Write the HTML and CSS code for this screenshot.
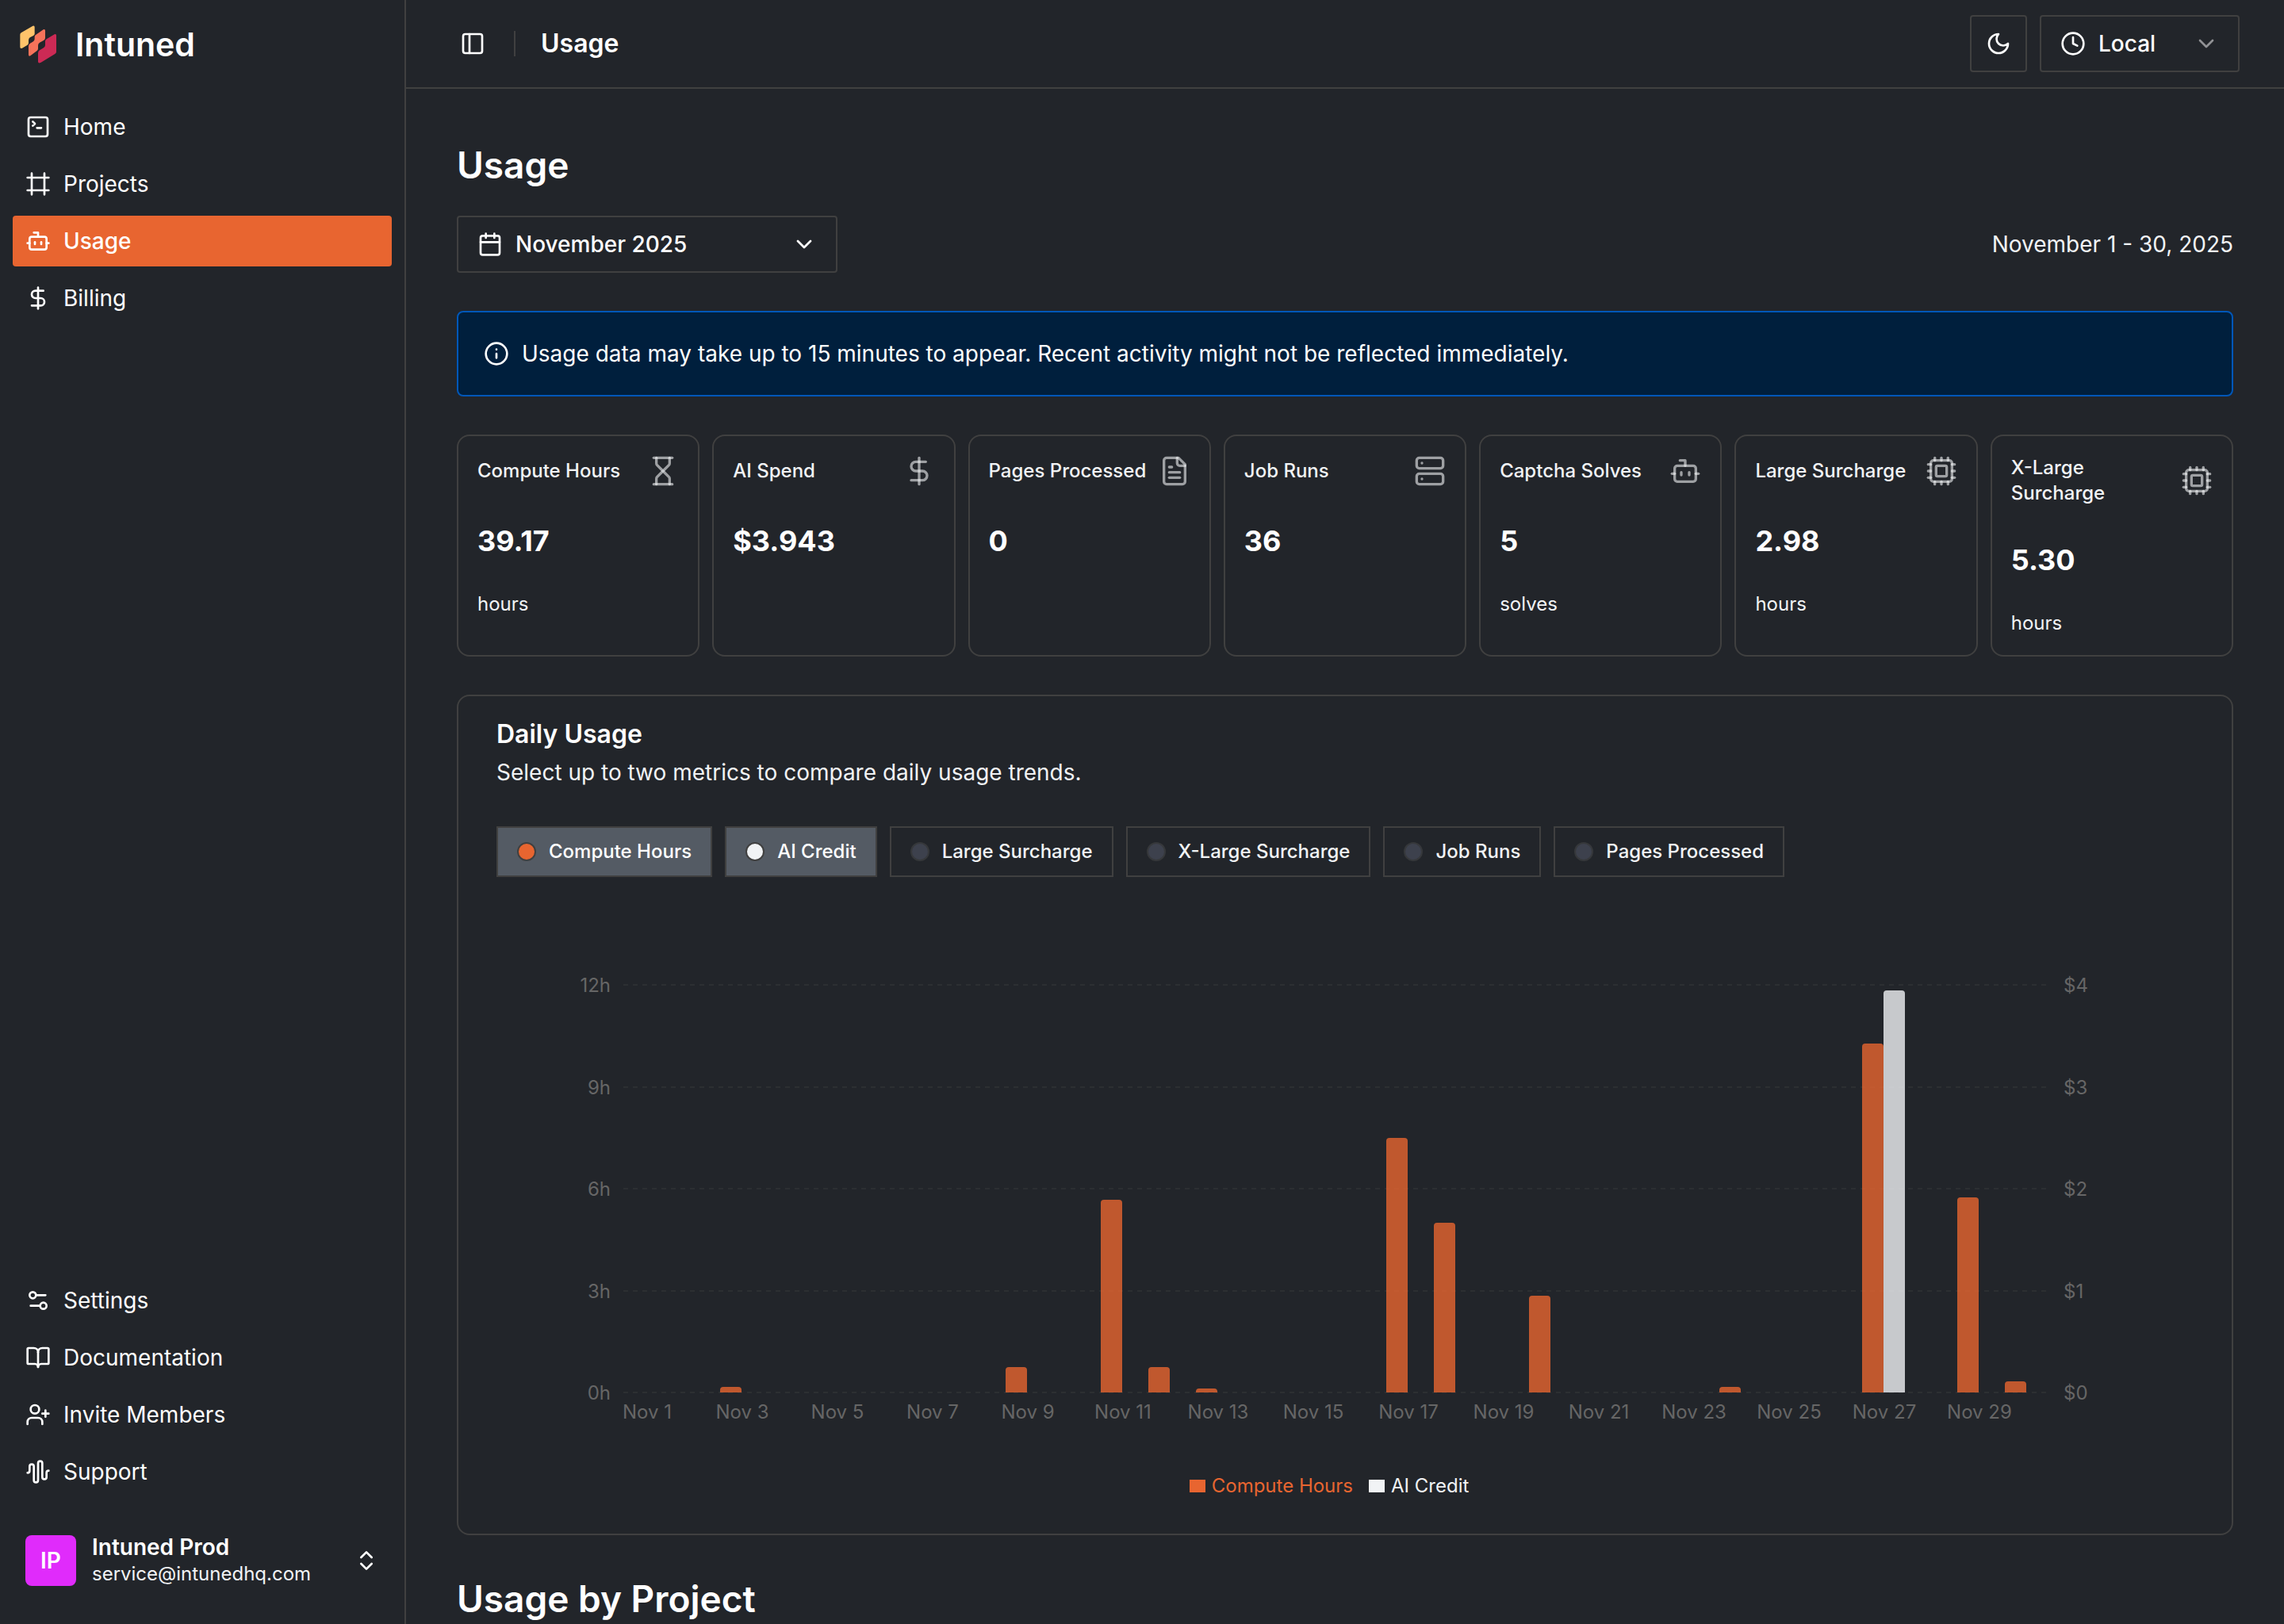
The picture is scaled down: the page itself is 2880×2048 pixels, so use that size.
FILE: index.html
```html
<!DOCTYPE html>
<html lang="en">

<head>
    <meta charset="utf-8">
    <title>Usage - Intuned</title>
    <meta name="viewport" content="width=device-width, initial-scale=1">
    <link rel="stylesheet" href="styles.css">
</head>

<body>

    <!-- shared icons -->
    <svg class="sprite" aria-hidden="true">
        <symbol id="i-terminal" viewBox="0 0 24 24"><path d="m7 11 2-2-2-2M11 13h4"/><rect x="3" y="3" width="18" height="18" rx="2"/></symbol>
        <symbol id="i-frame" viewBox="0 0 24 24"><path d="M22 6H2M22 18H2M6 2v20M18 2v20"/></symbol>
        <symbol id="i-bot" viewBox="0 0 24 24"><path d="M12 8V4H8"/><rect x="4" y="8" width="16" height="12" rx="2"/><path d="M2 14h2"/><path d="M20 14h2"/><path d="M15 13v2"/><path d="M9 13v2"/></symbol>
        <symbol id="i-dollar" viewBox="0 0 24 24"><path d="M12 2v20"/><path d="M17 5H9.5a3.5 3.5 0 0 0 0 7h5a3.5 3.5 0 0 1 0 7H6"/></symbol>
        <symbol id="i-settings" viewBox="0 0 24 24"><path d="M14 17H5M19 7h-9"/><circle cx="17" cy="17" r="3"/><circle cx="7" cy="7" r="3"/></symbol>
        <symbol id="i-book" viewBox="0 0 24 24"><path d="M12 7v14"/><path d="M3 18a1 1 0 0 1-1-1V4a1 1 0 0 1 1-1h5a4 4 0 0 1 4 4 4 4 0 0 1 4-4h5a1 1 0 0 1 1 1v13a1 1 0 0 1-1 1h-6a3 3 0 0 0-3 3 3 3 0 0 0-3-3z"/></symbol>
        <symbol id="i-user-plus" viewBox="0 0 24 24"><path d="M16 21v-2a4 4 0 0 0-4-4H6a4 4 0 0 0-4 4v2"/><circle cx="9" cy="7" r="4"/><path d="M19 8v6M22 11h-6"/></symbol>
        <symbol id="i-wave" viewBox="0 0 24 24"><path d="M2 13a2 2 0 0 0 2-2V7a2 2 0 0 1 4 0v13a2 2 0 0 0 4 0V4a2 2 0 0 1 4 0v13a2 2 0 0 0 4 0v-4a2 2 0 0 1 2-2"/></symbol>
        <symbol id="i-updown" viewBox="0 0 24 24"><path d="m7 15 5 5 5-5M7 9l5-5 5 5"/></symbol>
        <symbol id="i-panel" viewBox="0 0 24 24"><rect x="3" y="3" width="18" height="18" rx="2"/><path d="M9 3v18"/></symbol>
        <symbol id="i-moon" viewBox="0 0 24 24"><path d="M12 3a6 6 0 0 0 9 9 9 9 0 1 1-9-9Z"/></symbol>
        <symbol id="i-clock" viewBox="0 0 24 24"><circle cx="12" cy="12" r="10"/><path d="M12 6v6l4 2"/></symbol>
        <symbol id="i-chevron" viewBox="0 0 24 24"><path d="m6 9 6 6 6-6"/></symbol>
        <symbol id="i-calendar" viewBox="0 0 24 24"><path d="M8 2v4M16 2v4M3 10h18"/><rect x="3" y="4" width="18" height="18" rx="2"/></symbol>
        <symbol id="i-info" viewBox="0 0 24 24"><circle cx="12" cy="12" r="10"/><path d="M12 16v-4M12 8h.01"/></symbol>
        <symbol id="i-hourglass" viewBox="0 0 24 24"><path d="M5 22h14"/><path d="M5 2h14"/><path d="M17 22v-4.172a2 2 0 0 0-.586-1.414L12 12l-4.414 4.414A2 2 0 0 0 7 17.828V22"/><path d="M7 2v4.172a2 2 0 0 0 .586 1.414L12 12l4.414-4.414A2 2 0 0 0 17 6.172V2"/></symbol>
        <symbol id="i-file" viewBox="0 0 24 24"><path d="M15 2H6a2 2 0 0 0-2 2v16a2 2 0 0 0 2 2h12a2 2 0 0 0 2-2V7Z"/><path d="M14 2v4a2 2 0 0 0 2 2h4"/><path d="M10 9H8"/><path d="M16 13H8"/><path d="M16 17H8"/></symbol>
        <symbol id="i-server" viewBox="0 0 24 24"><rect x="2" y="2" width="20" height="8" rx="2"/><rect x="2" y="14" width="20" height="8" rx="2"/><path d="M6 6h.01M6 18h.01"/></symbol>
        <symbol id="i-cpu" viewBox="0 0 24 24"><rect x="4" y="4" width="16" height="16" rx="2"/><rect x="8" y="8" width="8" height="8" rx="1"/><path d="M12 20v2"/><path d="M12 2v2"/><path d="M17 20v2"/><path d="M17 2v2"/><path d="M2 12h2"/><path d="M2 17h2"/><path d="M2 7h2"/><path d="M20 12h2"/><path d="M20 17h2"/><path d="M20 7h2"/><path d="M7 20v2"/><path d="M7 2v2"/></symbol>
    </svg>

    <div class="app">
        <aside class="sidebar">
            <a class="brand" href="#">
                <svg class="brand-mark" viewBox="72 96 144 144" aria-hidden="true">
                    <path fill="#ffc46b" d="M80 124L124 98Q131 95 131 103V128Q131 132 126 135L113 142Q108 146 108 153V163Q108 167 104 170L84 182Q76 186 76 178V131Q76 127 80 124Z"/>
                    <path fill="#f5735a" d="M135 132L164 112Q171 109 171 116V143Q171 149 166 152L150 161Q144 165 144 172V184Q144 190 139 193L115 211Q108 214 108 207V175Q108 168 114 164L126 157Q131 153 131 147V139Q131 135 135 132Z"/>
                    <path fill="#cc2a55" d="M176 148L206 130Q213 127 213 134V196Q213 201 208 204L154 237Q144 241 144 233V201Q144 194 150 190L165 181Q171 177 171 171V156Q171 151 176 148Z"/>
                </svg>
                <span>Intuned</span>
            </a>
            <nav class="nav">
                <a class="nav-item" href="#"><svg class="icon"><use href="#i-terminal"/></svg>Home</a>
                <a class="nav-item" href="#"><svg class="icon"><use href="#i-frame"/></svg>Projects</a>
                <a class="nav-item active" href="#" aria-current="page"><svg class="icon"><use href="#i-bot"/></svg>Usage</a>
                <a class="nav-item" href="#"><svg class="icon"><use href="#i-dollar"/></svg>Billing</a>
            </nav>
            <nav class="nav nav-bottom">
                <a class="nav-item" href="#"><svg class="icon"><use href="#i-settings"/></svg>Settings</a>
                <a class="nav-item" href="#"><svg class="icon"><use href="#i-book"/></svg>Documentation</a>
                <a class="nav-item" href="#"><svg class="icon"><use href="#i-user-plus"/></svg>Invite Members</a>
                <a class="nav-item" href="#"><svg class="icon"><use href="#i-wave"/></svg>Support</a>
            </nav>
            <button class="account" type="button">
                <span class="avatar">IP</span>
                <span class="account-text">
                    <span class="account-name">Intuned Prod</span>
                    <span class="account-mail">service@intunedhq.com</span>
                </span>
                <svg class="icon"><use href="#i-updown"/></svg>
            </button>
        </aside>

        <div class="page">
            <header class="topbar">
                <button class="toggle" type="button" aria-label="Toggle sidebar"><svg class="icon"><use href="#i-panel"/></svg></button>
                <span class="divider"></span>
                <span class="topbar-title">Usage</span>
                <button class="theme" type="button" aria-label="Toggle theme"><svg class="icon"><use href="#i-moon"/></svg></button>
                <label class="select select-zone">
                    <svg class="icon"><use href="#i-clock"/></svg>
                    <select aria-label="Time zone">
                        <option>Local</option>
                        <option>UTC</option>
                    </select>
                    <svg class="icon dim"><use href="#i-chevron"/></svg>
                </label>
            </header>

            <main class="content">
                <h1 class="heading">Usage</h1>

                <div class="period">
                    <label class="select select-month">
                        <svg class="icon"><use href="#i-calendar"/></svg>
                        <select aria-label="Month">
                            <option>November 2025</option>
                            <option>October 2025</option>
                        </select>
                        <svg class="icon"><use href="#i-chevron"/></svg>
                    </label>
                    <span class="range">November 1 - 30, 2025</span>
                </div>

                <div class="notice" role="status">
                    <svg class="icon"><use href="#i-info"/></svg>
                    <span>Usage data may take up to 15 minutes to appear. Recent activity might not be reflected immediately.</span>
                </div>

                <section class="stats">
                    <div class="stat">
                        <div class="stat-head"><h2>Compute Hours</h2><svg class="icon icon-lg"><use href="#i-hourglass"/></svg></div>
                        <p class="stat-value">39.17</p>
                        <p class="stat-unit">hours</p>
                    </div>
                    <div class="stat">
                        <div class="stat-head"><h2>AI Spend</h2><svg class="icon icon-lg"><use href="#i-dollar"/></svg></div>
                        <p class="stat-value">$3.943</p>
                    </div>
                    <div class="stat">
                        <div class="stat-head"><h2>Pages Processed</h2><svg class="icon icon-lg"><use href="#i-file"/></svg></div>
                        <p class="stat-value">0</p>
                    </div>
                    <div class="stat">
                        <div class="stat-head"><h2>Job Runs</h2><svg class="icon icon-lg"><use href="#i-server"/></svg></div>
                        <p class="stat-value">36</p>
                    </div>
                    <div class="stat">
                        <div class="stat-head"><h2>Captcha Solves</h2><svg class="icon icon-lg"><use href="#i-bot"/></svg></div>
                        <p class="stat-value">5</p>
                        <p class="stat-unit">solves</p>
                    </div>
                    <div class="stat">
                        <div class="stat-head"><h2>Large Surcharge</h2><svg class="icon icon-lg"><use href="#i-cpu"/></svg></div>
                        <p class="stat-value">2.98</p>
                        <p class="stat-unit">hours</p>
                    </div>
                    <div class="stat">
                        <div class="stat-head"><h2>X-Large Surcharge</h2><svg class="icon icon-lg"><use href="#i-cpu"/></svg></div>
                        <p class="stat-value">5.30</p>
                        <p class="stat-unit">hours</p>
                    </div>
                </section>

                <section class="daily">
                    <h2 class="daily-title">Daily Usage</h2>
                    <p class="daily-sub">Select up to two metrics to compare daily usage trends.</p>

                    <div class="metrics">
                        <button class="metric on" type="button" aria-pressed="true"><i class="dot dot-hours"></i>Compute Hours</button>
                        <button class="metric on" type="button" aria-pressed="true"><i class="dot dot-credit"></i>AI Credit</button>
                        <button class="metric" type="button" aria-pressed="false"><i class="dot"></i>Large Surcharge</button>
                        <button class="metric" type="button" aria-pressed="false"><i class="dot"></i>X-Large Surcharge</button>
                        <button class="metric" type="button" aria-pressed="false"><i class="dot"></i>Job Runs</button>
                        <button class="metric" type="button" aria-pressed="false"><i class="dot"></i>Pages Processed</button>
                    </div>

                    <div class="chart">
                        <div class="axis axis-left"><span>12h</span><span>9h</span><span>6h</span><span>3h</span><span>0h</span></div>
                        <div class="plot">
                            <div class="lines"><i></i><i></i><i></i><i></i><i></i></div>
                            <!-- one column per day of the month -->
                            <div class="days">
                                <div class="day" style="grid-column: 3"><i class="bar" style="height: 1.4%"></i></div>
                                <div class="day" style="grid-column: 9"><i class="bar" style="height: 6.2%"></i></div>
                                <div class="day" style="grid-column: 11"><i class="bar" style="height: 47.2%"></i></div>
                                <div class="day" style="grid-column: 12"><i class="bar" style="height: 6.2%"></i></div>
                                <div class="day" style="grid-column: 13"><i class="bar" style="height: 0.9%"></i></div>
                                <div class="day" style="grid-column: 17"><i class="bar" style="height: 62.5%"></i></div>
                                <div class="day" style="grid-column: 18"><i class="bar" style="height: 41.6%"></i></div>
                                <div class="day" style="grid-column: 20"><i class="bar" style="height: 23.7%"></i></div>
                                <div class="day" style="grid-column: 24"><i class="bar" style="height: 1.4%"></i></div>
                                <div class="day" style="grid-column: 27"><i class="bar" style="height: 85.7%"></i><i class="bar bar-credit" style="height: 98.6%"></i></div>
                                <div class="day" style="grid-column: 29"><i class="bar" style="height: 47.8%"></i></div>
                                <div class="day" style="grid-column: 30"><i class="bar" style="height: 2.7%"></i></div>
                            </div>
                        </div>
                        <div class="axis axis-right"><span>$4</span><span>$3</span><span>$2</span><span>$1</span><span>$0</span></div>
                        <div class="dates">
                            <span>Nov 1</span><span>Nov 3</span><span>Nov 5</span><span>Nov 7</span><span>Nov 9</span>
                            <span>Nov 11</span><span>Nov 13</span><span>Nov 15</span><span>Nov 17</span><span>Nov 19</span>
                            <span>Nov 21</span><span>Nov 23</span><span>Nov 25</span><span>Nov 27</span><span>Nov 29</span>
                        </div>
                        <div class="legend">
                            <span class="legend-hours"><i></i>Compute Hours</span>
                            <span class="legend-credit"><i></i>AI Credit</span>
                        </div>
                    </div>
                </section>

                <h2 class="heading">Usage by Project</h2>
            </main>
        </div>
    </div>

</body>

</html>
```
FILE: styles.css
```css
* {
    box-sizing: border-box;
}

:root {
    --bg: #22252a;
    --line: #404040;
    --text: #ffffff;
    --soft: #f1f3f5;
    --axis: #666666;
    --orange: #e86530;
}

body {
    margin: 0;
    background: var(--bg);
    color: var(--text);
    font-family: Inter, "Liberation Sans", sans-serif;
    font-size: 28px;
    line-height: 40px;
}

h1,
h2,
p {
    margin: 0;
}

a {
    color: inherit;
    text-decoration: none;
}

button,
select {
    margin: 0;
    padding: 0;
    border: 0;
    background: none;
    color: inherit;
    font: inherit;
    cursor: pointer;
}

.sprite {
    display: none;
}

.icon {
    flex: none;
    width: 32px;
    height: 32px;
    fill: none;
    stroke: currentColor;
    stroke-width: 2;
    stroke-linecap: round;
    stroke-linejoin: round;
}

.icon-lg {
    width: 40px;
    height: 40px;
    color: rgba(241, 243, 245, 0.6);
}

.dim {
    opacity: 0.5;
}

.app {
    display: flex;
    height: 100vh;
}

/* sidebar */
.sidebar {
    display: flex;
    flex: none;
    flex-direction: column;
    width: 512px;
    border-right: 2px solid var(--line);
}

.brand {
    display: flex;
    align-items: center;
    gap: 23px;
    height: 112px;
    padding: 0 24px;
    font-size: 41px;
    font-weight: 600;
}

.brand-mark {
    width: 48px;
    height: 48px;
}

.nav {
    display: flex;
    flex-direction: column;
    gap: 8px;
    padding: 16px;
}

.nav-bottom {
    margin-top: auto;
}

.nav-item {
    display: flex;
    align-items: center;
    gap: 16px;
    height: 64px;
    padding: 0 16px;
    border-radius: 4px;
}

.nav-item.active {
    background: var(--orange);
    font-weight: 500;
}

.account {
    display: flex;
    align-items: center;
    gap: 20px;
    height: 96px;
    margin: 16px 16px 32px;
    padding: 0 16px;
    text-align: left;
}

.avatar {
    width: 64px;
    height: 64px;
    border-radius: 8px;
    background: #e02bfb;
    font-weight: 600;
    line-height: 64px;
    text-align: center;
}

.account-text {
    display: flex;
    flex: 1;
    flex-direction: column;
    gap: 2px;
    line-height: 32px;
}

.account-name {
    font-weight: 600;
}

.account-mail {
    color: var(--soft);
    font-size: 24px;
}

/* top bar */
.page {
    display: flex;
    flex: 1;
    flex-direction: column;
    min-width: 0;
}

.topbar {
    display: flex;
    flex: none;
    align-items: center;
    height: 112px;
    padding: 0 56px;
    border-bottom: 2px solid var(--line);
}

.toggle {
    display: flex;
    align-items: center;
    justify-content: center;
    width: 56px;
    height: 56px;
}

.divider {
    width: 2px;
    height: 32px;
    margin: 0 32px 0 24px;
    background: var(--line);
}

.topbar-title {
    font-size: 32px;
    font-weight: 600;
}

.theme {
    display: flex;
    align-items: center;
    justify-content: center;
    width: 72px;
    height: 72px;
    margin-left: auto;
    margin-right: 16px;
    border: 2px solid var(--line);
    border-radius: 4px;
}

.select {
    display: flex;
    align-items: center;
    gap: 16px;
    height: 72px;
    padding: 0 24px;
    border: 2px solid var(--line);
    border-radius: 4px;
    font-weight: 500;
}

.select select {
    flex: 1;
    min-width: 0;
    appearance: none;
}

.select option {
    background: var(--bg);
}

.select-zone {
    width: 252px;
}

.select-month {
    width: 480px;
}

/* content */
.content {
    display: flex;
    flex: 1;
    flex-direction: column;
    gap: 48px;
    min-height: 0;
    padding: 64px 64px 0;
    overflow: auto;
    scrollbar-width: none;
}

.heading {
    flex: none;
    font-size: 46px;
    font-weight: 600;
    line-height: 64px;
}

.period {
    display: flex;
    align-items: center;
    justify-content: space-between;
    margin-top: -16px;
}

.range {
    color: var(--soft);
}

.notice {
    display: flex;
    align-items: center;
    gap: 16px;
    padding: 32px;
    border: 2px solid #0057b8;
    border-radius: 8px;
    background: #001f3d;
}

.stats {
    display: grid;
    grid-template-columns: repeat(7, 1fr);
    gap: 16px;
}

.stat {
    padding: 24px;
    border: 2px solid var(--line);
    border-radius: 16px;
    color: var(--soft);
    font-size: 24px;
    line-height: 32px;
}

.stat-head {
    display: flex;
    align-items: center;
    justify-content: space-between;
}

.stat-head h2 {
    font-size: 24px;
    font-weight: 500;
}

.stat-value {
    margin: 48px 0 44px;
    color: var(--text);
    font-size: 36px;
    font-weight: 700;
    line-height: 40px;
}

/* daily chart */
.daily {
    padding: 28px 48px 44px;
    border: 2px solid var(--line);
    border-radius: 16px;
}

.daily-title {
    margin-bottom: 8px;
    font-size: 32px;
    font-weight: 600;
}

.daily-sub {
    color: var(--soft);
}

.metrics {
    display: flex;
    flex-wrap: wrap;
    gap: 16px;
    margin-top: 48px;
}

.metric {
    display: flex;
    align-items: center;
    gap: 16px;
    height: 64px;
    padding: 0 24px;
    border: 2px solid var(--line);
    color: var(--soft);
    font-size: 24px;
    font-weight: 500;
}

.metric.on {
    background: #545b64;
    color: var(--text);
}

.dot {
    width: 24px;
    height: 24px;
    border: 2px solid #36383b;
    border-radius: 50%;
    background: #3d414d;
}

.metric.on .dot {
    border-color: var(--line);
}

.metric .dot-hours {
    background: var(--orange);
}

.metric .dot-credit {
    background: var(--soft);
}

.chart {
    display: grid;
    grid-template-columns: 160px 1fr 180px;
    margin-top: 136px;
    color: var(--axis);
    font-size: 24px;
    line-height: 32px;
}

.axis {
    display: flex;
    flex-direction: column;
    justify-content: space-between;
    margin: -15px 0 -17px;
    padding: 0 16px;
}

.axis-left {
    text-align: right;
}

.plot {
    position: relative;
    height: 514px;
}

.lines {
    position: absolute;
    inset: -1px 0;
    display: flex;
    flex-direction: column;
    justify-content: space-between;
}

.lines i {
    height: 2px;
    background: repeating-linear-gradient(to right, #2c2f32 0 6px, transparent 6px 12px);
}

.days {
    position: relative;
    display: grid;
    grid-template-columns: repeat(30, 1fr);
    height: 100%;
}

.day {
    display: flex;
    grid-row: 1;
    align-items: flex-end;
    height: 514px;
    padding-left: 2px;
}

.bar {
    width: 27px;
    border-radius: 4px 4px 0 0;
    background: var(--orange);
    opacity: 0.8;
}

.bar-credit {
    background: var(--soft);
}

/* labels are centred on every second day */
.dates {
    display: grid;
    grid-column: 2;
    grid-template-columns: repeat(15, 1fr);
    margin: 9px calc(100% / 60) 0 calc(-100% / 60);
    text-align: center;
}

.legend {
    display: flex;
    grid-column: 2;
    justify-content: center;
    margin-top: 61px;
}

.legend span {
    display: flex;
    align-items: center;
    gap: 8px;
    margin-right: 20px;
}

.legend i {
    width: 20px;
    height: 16px;
    background: currentColor;
}

.legend-hours {
    color: var(--orange);
}

.legend-credit {
    color: var(--soft);
}
```
